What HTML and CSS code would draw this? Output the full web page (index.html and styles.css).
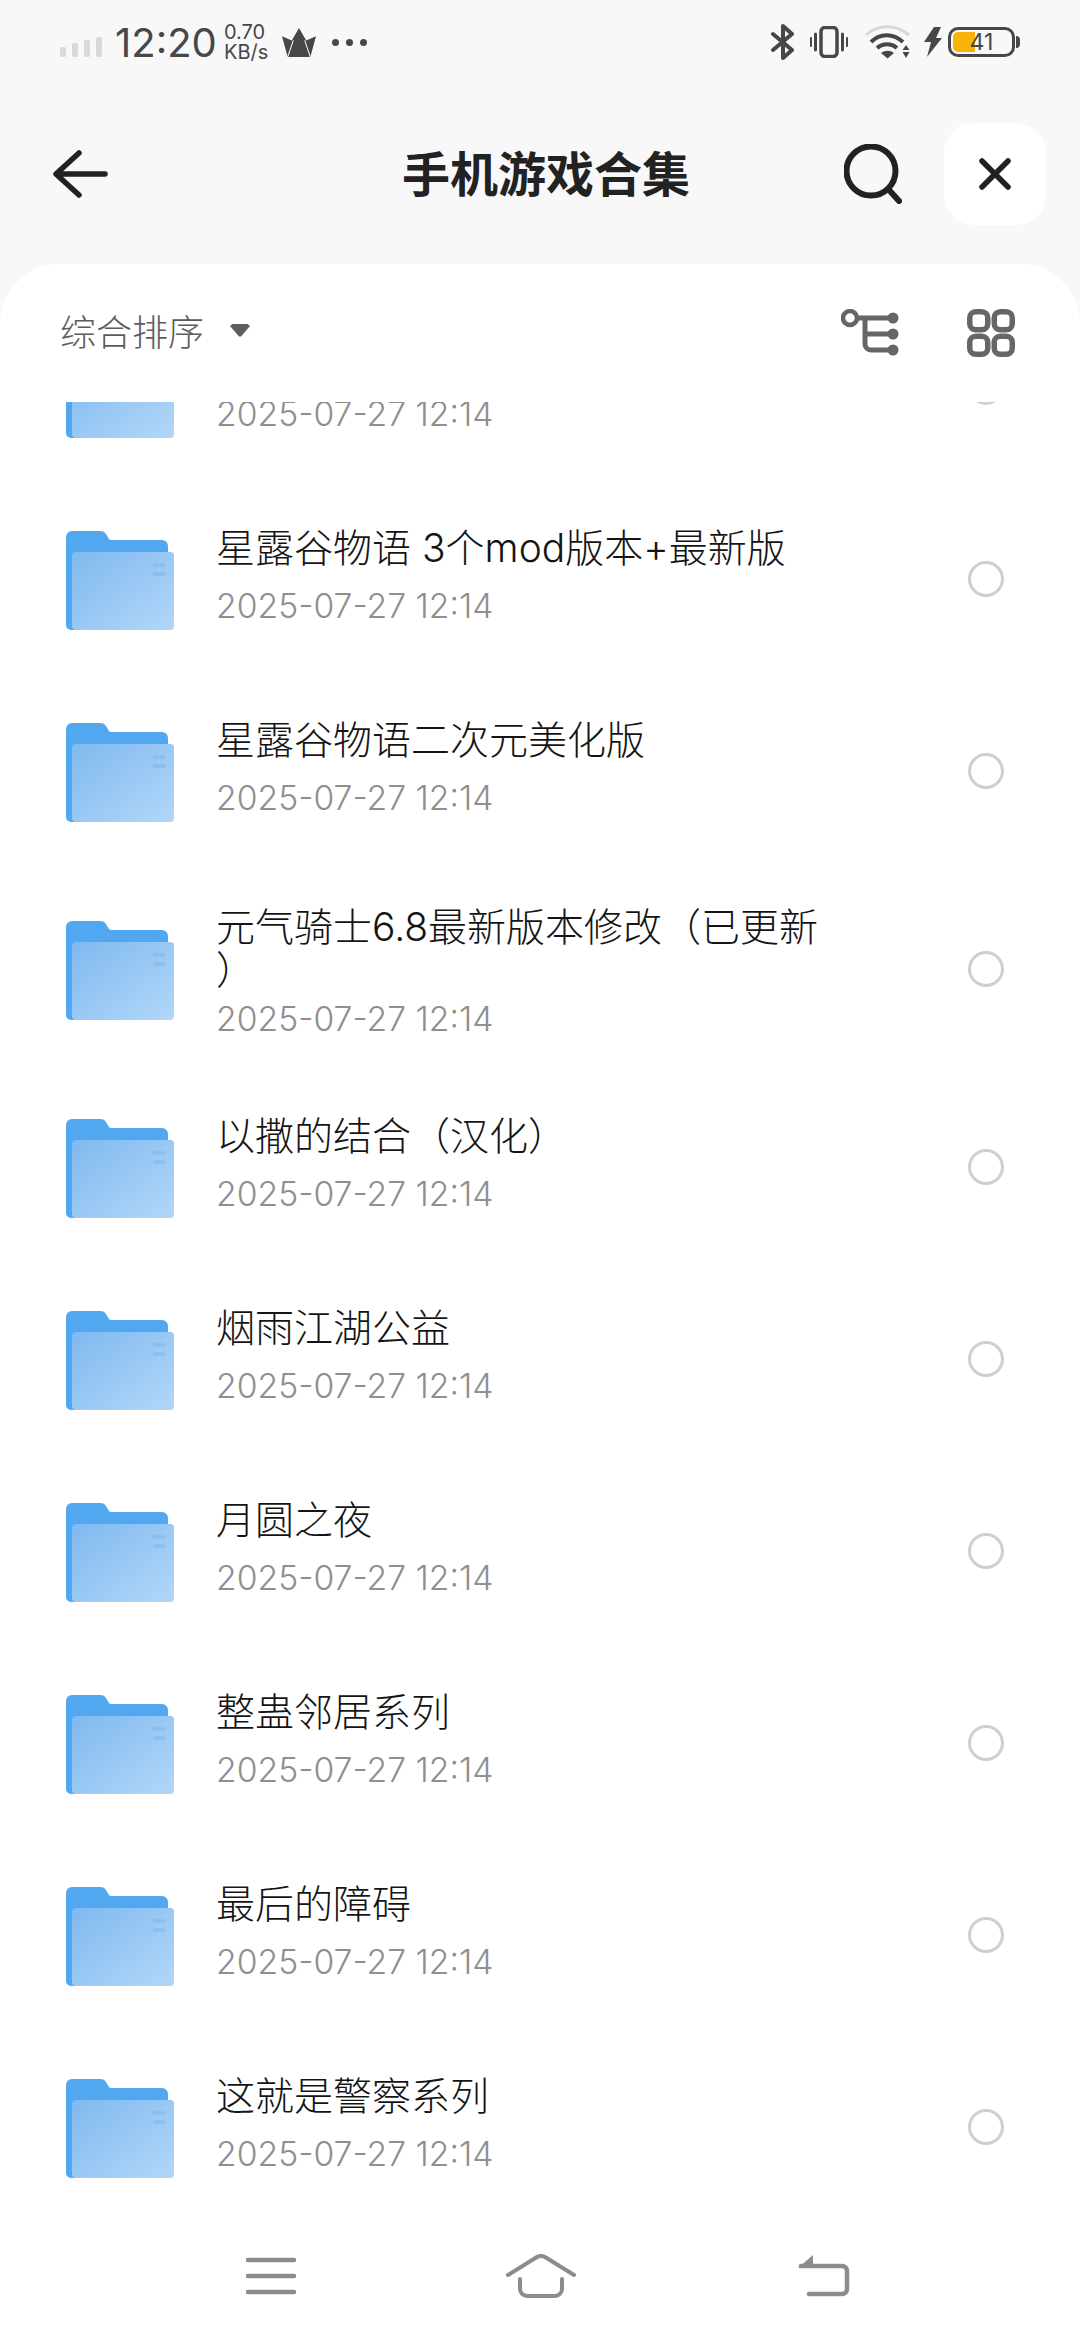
FILE: index.html
```html
<!DOCTYPE html>
<html lang="zh-CN">
<head>
  <meta charset="UTF-8">
  <title>手机游戏合集</title>
  <link rel="stylesheet" href="styles.css">
</head>
<body>
  <svg class="defs" width="0" height="0">
    <defs>
      <linearGradient id="panel" x1="0" y1="0" x2="1" y2="1">
        <stop offset="0" stop-color="#7fb9ef"/>
        <stop offset="1" stop-color="#b2d7f9"/>
      </linearGradient>
      <symbol id="folder" viewBox="0 0 108 99">
        <path d="M0 6a6 6 0 0 1 6-6h29a6 6 0 0 1 5 3l3 5a3 3 0 0 0 2 1h51a6 6 0 0 1 6 6v80a6 6 0 0 1-6 4H5a5 5 0 0 1-5-5z" fill="#52a8f0"/>
        <rect x="6" y="21" width="102" height="78" rx="4" fill="url(#panel)"/>
        <rect x="87" y="32" width="12" height="4" fill="#8ebfec"/>
        <rect x="87" y="41" width="12" height="4" fill="#8ebfec"/>
      </symbol>
    </defs>
  </svg>

  <div class="status">
    <div class="status-left">
      <div class="signal"><i></i><i class="b2"></i><i class="b3"></i><i class="b4"></i></div>
      <span class="clock">12:20</span>
      <div class="speed"><span>0.70</span><span>KB/s</span></div>
      <svg class="crown" width="34" height="29" viewBox="0 0 33 28"><path d="M16.500 0l7 12 9.500-4-5.500 20H5.500L0 8l9.500 4z" fill="#474747"/><path d="M5.500 28L11 12M27.500 28L22 12" stroke="#f8f8f8" stroke-width="1"/></svg>
      <div class="dots"><i></i><i></i><i></i></div>
    </div>
    <div class="status-right">
      <svg width="24" height="36" viewBox="0 0 24 36"><path d="M2 10l19 16-9 8V2l9 8L2 26" fill="none" stroke="#474747" stroke-width="4" stroke-linejoin="round" stroke-linecap="round"/></svg>
      <svg class="vib" width="38" height="32" viewBox="0 0 38 32"><rect x="11" y="1.500" width="16" height="29" rx="4" fill="none" stroke="#474747" stroke-width="3.500"/><path d="M5.500 8v16M32.500 8v16" stroke="#474747" stroke-width="3" stroke-linecap="round"/><path d="M1 12v8M37 12v8" stroke="#474747" stroke-width="2" stroke-linecap="round"/></svg>
      <svg class="wifi" width="48" height="34" viewBox="0 0 48 34">
        <path d="M2 10C14-1 32-1 45 10" fill="none" stroke="#d8d8d8" stroke-width="3"/>
        <path d="M7 17c9-9 22-9 32 0M13 23c6-5 14-5 20 0" fill="none" stroke="#474747" stroke-width="4"/>
        <path d="M17 28c4-3 9-3 13 0l-6.500 5.500z" fill="#474747"/>
        <path d="M42 20l-3.500 5h7zM38.500 27h7L42 33z" fill="#474747"/>
      </svg>
      <svg class="bolt" width="18" height="30" viewBox="0 0 18 30"><path d="M10 0h7l-5 11h6L3 30l4-15H0z" fill="#474747"/></svg>
      <div class="battery">
        <div class="battery-fill"></div>
        <span>41</span>
      </div>
      <div class="battery-tip"></div>
    </div>
  </div>

  <header class="header">
    <svg class="back" width="55" height="48" viewBox="0 0 55 48"><path d="M52 24H4M26 3L3 24l23 21" fill="none" stroke="#222" stroke-width="5.500" stroke-linecap="round" stroke-linejoin="round"/></svg>
    <h1>手机游戏合集</h1>
    <div class="header-actions">
      <svg width="58" height="60" viewBox="0 0 58 60"><circle cx="27" cy="27" r="24.500" fill="none" stroke="#222" stroke-width="6"/><path d="M46 47l9 10" stroke="#222" stroke-width="6" stroke-linecap="round"/></svg>
      <div class="close"><svg width="32" height="32" viewBox="0 0 32 32"><path d="M3 3l26 26M29 3L3 29" stroke="#222" stroke-width="5.500" stroke-linecap="round"/></svg></div>
    </div>
  </header>

  <main class="sheet">
    <div class="toolbar">
      <div class="sort"><span>综合排序</span><i class="caret"></i></div>
      <div class="views">
        <svg width="58" height="48" viewBox="0 0 58 48"><circle cx="9" cy="9" r="7" fill="none" stroke="#666" stroke-width="4.500"/><path d="M16 9h36M24 9v26a6 6 0 0 0 6 6h22M24 25h28" fill="none" stroke="#666" stroke-width="5"/><circle cx="52" cy="9" r="5.500" fill="#666"/><circle cx="52" cy="25" r="5.500" fill="#666"/><circle cx="52" cy="41" r="5.500" fill="#666"/></svg>
        <svg width="48" height="48" viewBox="0 0 48 48" fill="none" stroke="#666" stroke-width="5.500"><rect x="2.750" y="2.750" width="18" height="18" rx="6"/><rect x="27.250" y="2.750" width="18" height="18" rx="6"/><rect x="2.750" y="27.250" width="18" height="18" rx="6"/><rect x="27.250" y="27.250" width="18" height="18" rx="6"/></svg>
      </div>
    </div>

    <div class="list">
      <div class="rows">
        <div class="row">
          <svg class="folder"><use href="#folder"/></svg>
          <div class="info"><div class="name">&nbsp;</div><div class="date">2025-07-27 12:14</div></div>
          <i class="radio"></i>
        </div>
        <div class="row">
          <svg class="folder"><use href="#folder"/></svg>
          <div class="info"><div class="name">星露谷物语 3个mod版本+最新版</div><div class="date">2025-07-27 12:14</div></div>
          <i class="radio"></i>
        </div>
        <div class="row">
          <svg class="folder"><use href="#folder"/></svg>
          <div class="info"><div class="name">星露谷物语二次元美化版</div><div class="date">2025-07-27 12:14</div></div>
          <i class="radio"></i>
        </div>
        <div class="row row-tall">
          <svg class="folder"><use href="#folder"/></svg>
          <div class="info"><div class="name">元气骑士6.8最新版本修改（已更新<br>）</div><div class="date">2025-07-27 12:14</div></div>
          <i class="radio"></i>
        </div>
        <div class="row">
          <svg class="folder"><use href="#folder"/></svg>
          <div class="info"><div class="name">以撒的结合（汉化）</div><div class="date">2025-07-27 12:14</div></div>
          <i class="radio"></i>
        </div>
        <div class="row">
          <svg class="folder"><use href="#folder"/></svg>
          <div class="info"><div class="name">烟雨江湖公益</div><div class="date">2025-07-27 12:14</div></div>
          <i class="radio"></i>
        </div>
        <div class="row">
          <svg class="folder"><use href="#folder"/></svg>
          <div class="info"><div class="name">月圆之夜</div><div class="date">2025-07-27 12:14</div></div>
          <i class="radio"></i>
        </div>
        <div class="row">
          <svg class="folder"><use href="#folder"/></svg>
          <div class="info"><div class="name">整蛊邻居系列</div><div class="date">2025-07-27 12:14</div></div>
          <i class="radio"></i>
        </div>
        <div class="row">
          <svg class="folder"><use href="#folder"/></svg>
          <div class="info"><div class="name">最后的障碍</div><div class="date">2025-07-27 12:14</div></div>
          <i class="radio"></i>
        </div>
        <div class="row">
          <svg class="folder"><use href="#folder"/></svg>
          <div class="info"><div class="name">这就是警察系列</div><div class="date">2025-07-27 12:14</div></div>
          <i class="radio"></i>
        </div>
      </div>
    </div>

    <nav class="nav">
      <svg width="50" height="38" viewBox="0 0 50 38"><path d="M2 3h46M2 19h46M2 35h46" stroke="#8c8c8c" stroke-width="4.500" stroke-linecap="round"/></svg>
      <svg width="70" height="44" viewBox="0 0 70 44" fill="none" stroke="#8c8c8c" stroke-width="4" stroke-linecap="round" stroke-linejoin="round"><path d="M2 21L31 3q4-2 8 0l29 18"/><path d="M14 25v10a7 7 0 0 0 7 7h28a7 7 0 0 0 7-7V25"/></svg>
      <svg class="nav-back" width="52" height="42" viewBox="0 0 52 42"><path d="M3 11h41a5 5 0 0 1 5 5v18a5 5 0 0 1-5 5H11" fill="none" stroke="#8c8c8c" stroke-width="4.500" stroke-linecap="round"/><path d="M15 0v13H0z" fill="#8c8c8c"/></svg>
    </nav>
  </main>
</body>
</html>
```

FILE: styles.css
```css
* {
  box-sizing: border-box;
}

body {
  margin: 0;
  width: 1080px;
  height: 2340px;
  overflow: hidden;
  background: #f8f8f8;
  font-family: "Noto Sans CJK SC", "Noto Sans", sans-serif;
  color: #222;
  display: flex;
  flex-direction: column;
}

i {
  display: block;
}

svg {
  display: block;
}

.defs {
  position: absolute;
}

/* status bar */
.status {
  height: 84px;
  flex: none;
  display: flex;
  align-items: center;
  justify-content: space-between;
  padding: 0 60px 0 60px;
  color: #474747;
}

.status-left,
.status-right {
  display: flex;
  align-items: center;
}

.signal {
  display: flex;
  align-items: flex-end;
  gap: 6px;
  margin-right: 13px;
  margin-top: 10px;
}

.signal i {
  width: 6px;
  height: 10px;
  border-radius: 2px;
  background: #d9d9d9;
}

.signal .b2 {
  height: 14px;
}

.signal .b3 {
  height: 17px;
}

.signal .b4 {
  height: 20px;
}

.clock {
  font-family: Inter, sans-serif;
  font-size: 40px;
  width: 109px;
}

.speed {
  display: flex;
  flex-direction: column;
  font-family: Inter, sans-serif;
  font-size: 20px;
  line-height: 20px;
  width: 58px;
}

.dots {
  display: flex;
  gap: 7px;
  margin-left: 16px;
}

.dots i {
  width: 7px;
  height: 7px;
  border-radius: 50%;
  background: #474747;
}

.vib {
  margin-left: 15px;
}

.wifi {
  margin-left: 16px;
}

.bolt {
  margin-left: 12px;
}

.battery {
  position: relative;
  width: 67px;
  height: 30px;
  margin-left: 6px;
  border: 3px solid #474747;
  border-radius: 10px;
  overflow: hidden;
  text-align: center;
  font-family: Inter, sans-serif;
  font-size: 23px;
  line-height: 24px;
}

.battery-fill {
  position: absolute;
  left: 2px;
  top: 2px;
  bottom: 2px;
  width: 22px;
  border-radius: 5px 0 0 5px;
  background: #f9b208;
}

.battery span {
  position: relative;
}

.battery-tip {
  width: 4px;
  height: 12px;
  margin-left: 1px;
  border-radius: 0 4px 4px 0;
  background: #474747;
}

/* title bar */
.header {
  height: 180px;
  flex: none;
  display: grid;
  grid-template-columns: 1fr auto 1fr;
  align-items: center;
  padding: 0 34px 0 46px;
}

.back {
  margin-left: 7px;
}

h1 {
  margin: 0 0 6px;
  font-size: 48px;
  font-weight: 700;
  line-height: 60px;
}

.header-actions {
  display: flex;
  align-items: center;
  justify-content: flex-end;
  gap: 42px;
}

.close {
  width: 102px;
  height: 102px;
  border-radius: 30px;
  background: #fff;
  display: flex;
  align-items: center;
  justify-content: center;
}

/* white sheet */
.sheet {
  flex: 1;
  min-height: 0;
  display: flex;
  flex-direction: column;
  background: #fff;
  border-radius: 60px 60px 0 0;
}

.toolbar {
  height: 138px;
  flex: none;
  display: flex;
  align-items: center;
  justify-content: space-between;
  padding: 0 65px 0 60px;
}

.sort {
  display: flex;
  align-items: center;
  gap: 26px;
  font-size: 36px;
  font-weight: 300;
  line-height: 50px;
  color: #5c5c5c;
  margin-bottom: 6px;
}

.caret {
  width: 20px;
  height: 13px;
  background: #5f5f5f;
  clip-path: polygon(0 20%, 15% 0, 85% 0, 100% 20%, 55% 100%, 45% 100%);
}

.views {
  display: flex;
  align-items: center;
  gap: 68px;
}

.list {
  flex: 1;
  min-height: 0;
  overflow: hidden;
}

/* list is scrolled by 111px */
.rows {
  margin-top: -111px;
}

.row {
  height: 192px;
  display: flex;
  align-items: center;
  padding: 0 76px 0 66px;
}

.row-tall {
  height: 204px;
}

.folder {
  width: 108px;
  height: 99px;
  flex: none;
  margin-top: 3px;
}

.info {
  flex: 1;
  min-width: 0;
  margin-left: 42px;
  padding-bottom: 3px;
}

.name {
  font-family: Inter, "Noto Sans CJK SC", sans-serif;
  font-size: 39px;
  font-weight: 300;
  line-height: 44px;
  color: #141414;
  text-spacing-trim: space-all;
}

.date {
  margin-top: 13px;
  font-family: Inter, sans-serif;
  font-size: 33.7px;
  font-weight: 300;
  line-height: 46px;
  color: #8f8f8f;
}

.row-tall .info {
  padding: 8px 0 0;
}

.row-tall .name {
  line-height: 43px;
}

.row-tall .date {
  margin-top: 5px;
}

.radio {
  width: 36px;
  height: 36px;
  flex: none;
  border: 3.5px solid #cfcfd3;
  border-radius: 50%;
}

/* bottom nav */
.nav {
  height: 128px;
  flex: none;
  display: flex;
  align-items: center;
  gap: 210px;
  padding: 0 0 0 246px;
}

.nav-back {
  margin-left: 12px;
}
```
